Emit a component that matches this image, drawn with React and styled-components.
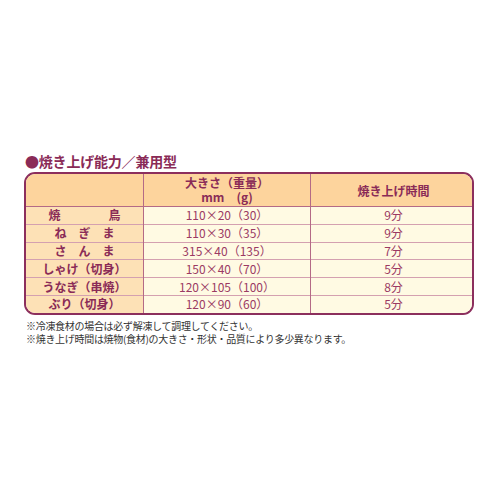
import React from "react";
import styled, { createGlobalStyle } from "styled-components";

const Global = createGlobalStyle`
  html, body { margin: 0; padding: 0; background: #fff; }
  body { font-family: "Noto Sans CJK JP", "Noto Sans", sans-serif; }
`;

const Page = styled.div`
  width: 500px;
  height: 500px;
  box-sizing: border-box;
  padding: 152px 26px 0 24px;
  display: flex;
  flex-direction: column;
`;

const Heading = styled.h2`
  margin: 0 0 2px 1px;
  font-size: 14px;
  line-height: 18px;
  font-weight: 700;
  color: #8a2b57;
  letter-spacing: -0.2px;
`;

const Frame = styled.div`
  border: 2px solid #8c2f5d;
  border-radius: 11px;
  overflow: hidden;
  width: 450px;
  box-sizing: border-box;
`;

const Table = styled.table`
  width: 100%;
  border-collapse: collapse;
  table-layout: fixed;
`;

const Head = styled.th`
  background: #fdd49d;
  color: #8a2b57;
  font-size: 12px;
  font-weight: 700;
  height: 32px;
  padding: 0;
  text-align: center;
  vertical-align: middle;
  border-left: ${(p) => (p.$first ? "none" : "1px solid #b46a86")};
  border-bottom: 1px solid #b46a86;
  width: ${(p) => p.$w}px;
`;

const HeadLine = styled.span`
  display: block;
  line-height: 14px;
  height: 14px;
  overflow: visible;
`;

const Label = styled.td`
  background: #fde1b6;
  color: #8a2b57;
  font-size: 12px;
  font-weight: 700;
  height: 16.8px;
  line-height: 16px;
  padding: 0;
  text-align: center;
  white-space: pre;
  border-top: ${(p) => (p.$top ? "none" : "1px solid #d4a0b0")};
`;

const Cell = styled.td`
  background: #fffae3;
  color: #9b3a63;
  font-size: 12px;
  font-weight: 400;
  height: 16.8px;
  line-height: 16px;
  padding: 0;
  text-align: center;
  border-left: 1px solid #b46a86;
  border-top: ${(p) => (p.$top ? "none" : "1px solid #d4a0b0")};
`;

const Notes = styled.div`
  margin: 4px 0 0 2px;
  display: flex;
  flex-direction: column;
  font-size: 10px;
  color: #333;
  letter-spacing: -0.3px;
`;

const NoteLine = styled.div`
  height: 13px;
  line-height: 13px;
`;

const rows = [
  ["焼　　　　鳥", "110×20（30）", "9分"],
  ["ね　ぎ　ま", "110×30（35）", "9分"],
  ["さ　ん　ま", "315×40（135）", "7分"],
  ["しゃけ（切身）", "150×40（70）", "5分"],
  ["うなぎ（串焼）", "120×105（100）", "8分"],
  ["ぶり（切身）", "120×90（60）", "5分"],
];

export default function App() {
  return (
    <>
      <Global />
      <Page>
        <Heading>●焼き上げ能力／兼用型</Heading>
        <Frame>
          <Table>
            <thead>
              <tr>
                <Head $first $w={117}></Head>
                <Head $w={166}>
                  <HeadLine>大きさ（重量）</HeadLine>
                  <HeadLine>mm　(g)</HeadLine>
                </Head>
                <Head $w={165}>焼き上げ時間</Head>
              </tr>
            </thead>
            <tbody>
              {rows.map((r, i) => (
                <tr key={i}>
                  <Label $top={i === 0}>{r[0]}</Label>
                  <Cell $top={i === 0}>{r[1]}</Cell>
                  <Cell $top={i === 0}>{r[2]}</Cell>
                </tr>
              ))}
            </tbody>
          </Table>
        </Frame>
        <Notes>
          <NoteLine>※冷凍食材の場合は必ず解凍して調理してください。</NoteLine>
          <NoteLine>※焼き上げ時間は焼物(食材)の大きさ・形状・品質により多少異なります。</NoteLine>
        </Notes>
      </Page>
    </>
  );
}
